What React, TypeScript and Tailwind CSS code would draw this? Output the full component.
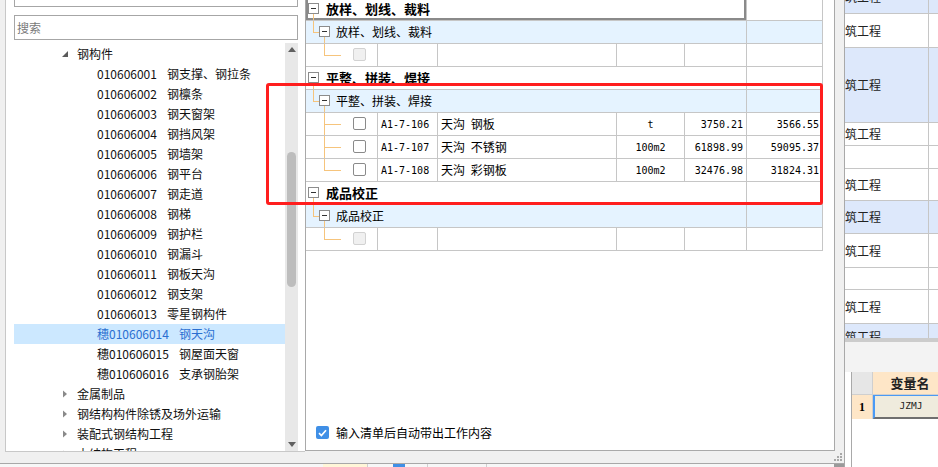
import React from 'react';

const SANS = "font-['Noto_Sans_CJK_SC',sans-serif]";
const MONO = "font-['DejaVu_Sans_Mono',monospace]";
const LINE = 'border-[#c6c6c6]';

type TreeRow = { code?: string; name: string; level: 1 | 2; arrow?: 'open' | 'closed'; selected?: boolean };

const tree: TreeRow[] = [
  { name: '钢构件', level: 1, arrow: 'open' },
  { code: '010606001', name: '钢支撑、钢拉条', level: 2 },
  { code: '010606002', name: '钢檩条', level: 2 },
  { code: '010606003', name: '钢天窗架', level: 2 },
  { code: '010606004', name: '钢挡风架', level: 2 },
  { code: '010606005', name: '钢墙架', level: 2 },
  { code: '010606006', name: '钢平台', level: 2 },
  { code: '010606007', name: '钢走道', level: 2 },
  { code: '010606008', name: '钢梯', level: 2 },
  { code: '010606009', name: '钢护栏', level: 2 },
  { code: '010606010', name: '钢漏斗', level: 2 },
  { code: '010606011', name: '钢板天沟', level: 2 },
  { code: '010606012', name: '钢支架', level: 2 },
  { code: '010606013', name: '零星钢构件', level: 2 },
  { code: '穗010606014', name: '钢天沟', level: 2, selected: true },
  { code: '穗010606015', name: '钢屋面天窗', level: 2 },
  { code: '穗010606016', name: '支承钢胎架', level: 2 },
  { name: '金属制品', level: 1, arrow: 'closed' },
  { name: '钢结构构件除锈及场外运输', level: 1, arrow: 'closed' },
  { name: '装配式钢结构工程', level: 1, arrow: 'closed' },
  { name: '木结构工程', level: 1, arrow: 'closed' },
];

type Row =
  | { kind: 'group'; title: string; focus?: boolean }
  | { kind: 'sub'; title: string }
  | { kind: 'item'; code?: string; name?: string; unit?: string; p1?: string; p2?: string; last?: boolean; disabled?: boolean };

const rows: Row[] = [
  { kind: 'group', title: '放样、划线、裁料', focus: true },
  { kind: 'sub', title: '放样、划线、裁料' },
  { kind: 'item', disabled: true, last: true },
  { kind: 'group', title: '平整、拼装、焊接' },
  { kind: 'sub', title: '平整、拼装、焊接' },
  { kind: 'item', code: 'A1-7-106', name: '天沟 钢板', unit: 't', p1: '3750.21', p2: '3566.55' },
  { kind: 'item', code: 'A1-7-107', name: '天沟 不锈钢', unit: '100m2', p1: '61898.99', p2: '59095.37' },
  { kind: 'item', code: 'A1-7-108', name: '天沟 彩钢板', unit: '100m2', p1: '32476.98', p2: '31824.31', last: true },
  { kind: 'group', title: '成品校正' },
  { kind: 'sub', title: '成品校正' },
  { kind: 'item', disabled: true, last: true },
];

// right hand list (scrolled horizontally, only part of 建筑工程 shows)
const rightRows = [
  { h: 'h-[34px] mt-[-20px]', blue: true, text: true },
  { h: 'h-[34px]', blue: false, text: true },
  { h: 'h-[75px]', blue: true, text: true },
  { h: 'h-[23px]', blue: false, text: true },
  { h: 'h-[23px]', blue: false, text: false },
  { h: 'h-[32px]', blue: false, text: true },
  { h: 'h-[33px]', blue: true, text: true },
  { h: 'h-[34px]', blue: false, text: true },
  { h: 'h-[22px]', blue: false, text: false },
  { h: 'h-[34px]', blue: false, text: true },
  { h: 'h-[26px]', blue: true, text: true },
];

function MinusBox({ left }: { left: string }) {
  return (
    <span className={`absolute top-[5px] flex h-[11px] w-[11px] items-center justify-center border border-[#8c8c8c] bg-white ${left}`}>
      <span className="h-px w-[5px] bg-[#333]" />
    </span>
  );
}

function Check({ disabled }: { disabled?: boolean }) {
  return disabled ? (
    <span className="absolute left-[47px] top-[4px] h-[13px] w-[13px] rounded-[2px] border border-[#d2d2d2] bg-[#f0f0f0]" />
  ) : (
    <span className="absolute left-[47px] top-[4px] h-[13px] w-[13px] rounded-[2px] border border-[#8a8a8a] bg-white" />
  );
}

function TableRow({ row }: { row: Row }) {
  if (row.kind === 'group') {
    return (
      <div className={`flex h-[23px] border-b ${LINE} bg-white`}>
        <div
          className={`relative flex w-[441px] items-center border-r ${LINE} pl-[20px] text-[13px] font-bold text-black ${
            row.focus ? 'shadow-[inset_0_0_0_2px_#8a8a8a]' : ''
          }`}
        >
          <MinusBox left="left-[2px]" />
          <span className="absolute left-[7px] top-[16px] h-[6px] w-px bg-[#f6c47c]" />
          {row.title}
        </div>
        <div className={`w-[76px] border-r ${LINE}`} />
      </div>
    );
  }
  if (row.kind === 'sub') {
    return (
      <div className={`flex h-[23px] border-b ${LINE} bg-[#e5f3ff]`}>
        <div className={`relative flex w-[441px] items-center border-r ${LINE} pl-[30px] text-[12px] text-black`}>
          <span className="absolute left-[7px] top-0 h-[11px] w-px bg-[#f6c47c]" />
          <span className="absolute left-[7px] top-[11px] h-px w-[6px] bg-[#f6c47c]" />
          <MinusBox left="left-[13px]" />
          <span className="absolute left-[18px] top-[16px] h-[6px] w-px bg-[#f6c47c]" />
          {row.title}
        </div>
        <div className={`w-[76px] border-r ${LINE}`} />
      </div>
    );
  }
  return (
    <div className={`flex h-[23px] border-b ${LINE} bg-white text-black`}>
      <div className={`relative w-[72px] border-r ${LINE}`}>
        <span className={`absolute left-[18px] top-0 w-px bg-[#f6c47c] ${row.last ? 'h-[11px]' : 'h-[22px]'}`} />
        <span className="absolute left-[18px] top-[11px] h-px w-[17px] bg-[#f6c47c]" />
        <Check disabled={row.disabled} />
      </div>
      <div className={`flex w-[60px] items-center border-r ${LINE} pl-[3px] ${MONO} text-[10px]`}>{row.code}</div>
      <div className={`flex w-[179px] items-center border-r ${LINE} pl-[3px] text-[12px] [word-spacing:3px]`}>{row.name}</div>
      <div className={`flex w-[68px] items-center justify-center border-r ${LINE} ${MONO} text-[10px]`}>{row.unit}</div>
      <div className={`flex w-[62px] items-center justify-end border-r ${LINE} pr-[3px] ${MONO} text-[10px]`}>{row.p1}</div>
      <div className={`flex w-[76px] items-center justify-end border-r ${LINE} pr-[3px] ${MONO} text-[10px]`}>{row.p2}</div>
    </div>
  );
}

export default function App() {
  return (
    <div className={`relative flex h-[467px] w-[938px] overflow-hidden bg-[#f0f0f0] ${SANS}`}>
      {/* dialog */}
      <div className="flex w-[844px] flex-col">
        <div className="flex h-[452px] items-start">
          <div className="w-[5px]" />

          {/* left: search + tree */}
          <div className="flex h-[452px] w-[300px] flex-col border-b border-l border-[#c8c8c8] bg-white pl-[8px]">
            <div className="mt-[-16px] flex h-[23px] w-[284px] items-start overflow-hidden border border-[#a6a6a6] pl-[3px] text-[12px] leading-[14px] text-[#222]">
              广东 清单指引
            </div>
            <div className="mt-[8px] flex h-[25px] w-[284px] items-center border border-[#a6a6a6] pl-[2px] text-[12px] text-[#7a7a7a]">
              搜索
            </div>
            <div className="mt-[3px] flex min-h-0 flex-1">
              <div className="w-[271px] overflow-hidden pt-px text-[12px] text-[#111]">
                {tree.map((t, i) => (
                  <div
                    key={i}
                    className={`flex h-[20px] items-center whitespace-nowrap ${t.level === 1 ? 'pl-[48px]' : 'pl-[83px]'} ${
                      t.selected ? 'bg-[#cce8ff] text-[#2a6fd1]' : ''
                    }`}
                  >
                    {t.arrow === 'open' && (
                      <svg width="6" height="6" viewBox="0 0 6 6" className="mr-[9px]">
                        <polygon points="6,0 6,6 0,6" fill="#5a5a5a" />
                      </svg>
                    )}
                    {t.arrow === 'closed' && (
                      <svg width="6" height="8" viewBox="0 0 6 8" className="mr-[9px]">
                        <polygon points="1,0.5 5,4 1,7.5" fill="#8a8a8a" />
                      </svg>
                    )}
                    {t.code && <span>{t.code}</span>}
                    <span className={t.code ? 'ml-[10px]' : ''}>{t.name}</span>
                  </div>
                ))}
              </div>
              <div className="flex w-[13px] flex-col items-center bg-[#e8e8e8] py-[4px]">
                <svg width="8" height="5" viewBox="0 0 8 5">
                  <polygon points="4,0 8,5 0,5" fill="#606060" />
                </svg>
                <div className="mt-[100px] h-[135px] w-[9px] rounded-full bg-[#bdbdbd]" />
                <div className="flex-1" />
                <svg width="8" height="5" viewBox="0 0 8 5">
                  <polygon points="0,0 8,0 4,5" fill="#606060" />
                </svg>
              </div>
            </div>
          </div>

          {/* middle: sub items table */}
          <div className="flex h-[451px] w-[530px] flex-col border-b border-l border-r border-[#a9a9a9] bg-white pb-[11px]">
            <div className="mt-[-2px] w-[517px]">
              {rows.map((r, i) => (
                <TableRow key={i} row={r} />
              ))}
            </div>
            <div className="flex-1" />
            <div className="flex h-[13px] items-center pl-[10px] text-[12px] text-black">
              <span className="flex h-[13px] w-[13px] items-center justify-center rounded-[2px] bg-[#3f8fe6]">
                <svg width="9" height="8" viewBox="0 0 9 8">
                  <path d="M1 4.2 L3.4 6.5 L8 1.3" stroke="white" strokeWidth="1.7" fill="none" />
                </svg>
              </span>
              <span className="ml-[7px]">输入清单后自动带出工作内容</span>
            </div>
          </div>
        </div>

        {/* bottom status strip */}
        <div className="flex h-[11px] justify-end pr-[2px] pt-[1px]">
          <svg width="8" height="8" viewBox="0 0 8 8">
            <rect x="6" y="0" width="2" height="2" fill="#a8a8a8" />
            <rect x="3" y="3" width="2" height="2" fill="#a8a8a8" />
            <rect x="6" y="3" width="2" height="2" fill="#a8a8a8" />
            <rect x="0" y="6" width="2" height="2" fill="#a8a8a8" />
            <rect x="3" y="6" width="2" height="2" fill="#a8a8a8" />
            <rect x="6" y="6" width="2" height="2" fill="#a8a8a8" />
          </svg>
        </div>
        <div className="h-px bg-[#a8a8a8]" />
        <div className="flex h-[3px] bg-[#f7f7f7]">
          <div className="w-[323px]" />
          <div className="w-[45px] border-r border-[#d0d0d0] bg-[#fff6d8]" />
          <div className="w-[25px]" />
          <div className="w-[12px] bg-[#3f8fe6]" />
          <div className="w-[23px] border-r border-[#d0d0d0]" />
          <div className="w-[59px] border-r border-[#d0d0d0]" />
          <div className="flex-1" />
          <div className="w-[10px] bg-[#9a9a9a]" />
        </div>
      </div>

      {/* right panel */}
      <div className="flex w-[94px] flex-col border-l border-[#a9a9a9]">
        <div className="h-[338px] overflow-hidden">
          {rightRows.map((r, i) => (
            <div key={i} className={`flex border-b ${LINE} ${r.h} ${r.blue ? 'bg-[#dde8fb]' : 'bg-white'}`}>
              <div className={`flex w-[84px] items-center overflow-hidden border-r ${LINE} text-[12px] text-[#222]`}>
                {r.text && <span className="ml-[-12px] whitespace-nowrap">建筑工程</span>}
              </div>
              <div className="flex-1" />
            </div>
          ))}
        </div>
        <div className="h-[4px] bg-[#cccccc]" />
        <div className="h-[30px] bg-[#f3f3f3]" />
        <div className="flex flex-1 bg-white pl-[6px]">
          <div className="flex-1 border-l border-[#a9a9a9]">
            <div className="flex h-[23px] border-b border-[#cfcfcf]">
              <div className="w-[21px] border-r border-[#cfcfcf] bg-[#e6e6e6]" />
              <div className="flex w-[74px] shrink-0 items-center justify-center bg-[#fee6c7] text-[13px] font-bold text-[#222]">
                变量名
              </div>
            </div>
            <div className="flex h-[24px]">
              <div className="flex w-[21px] items-center justify-center border-r border-[#cfcfcf] bg-[#fee6c7] font-['Liberation_Serif',serif] text-[12px] font-bold">
                1
              </div>
              <div
                className={`flex w-[74px] shrink-0 items-center justify-center border-b-2 border-l-2 border-t border-b-[#6f6f6f] border-l-[#4a9af5] border-t-[#4a9af5] bg-[#efebdd] ${MONO} text-[9.5px] text-[#222]`}
              >
                JZMJ
              </div>
            </div>
          </div>
        </div>
      </div>

      {/* red annotation frame */}
      <div className="absolute left-[266px] top-[83px] h-[122px] w-[557px] rounded-[3px] border-[3px] border-[#ff1e1e]" />
    </div>
  );
}
